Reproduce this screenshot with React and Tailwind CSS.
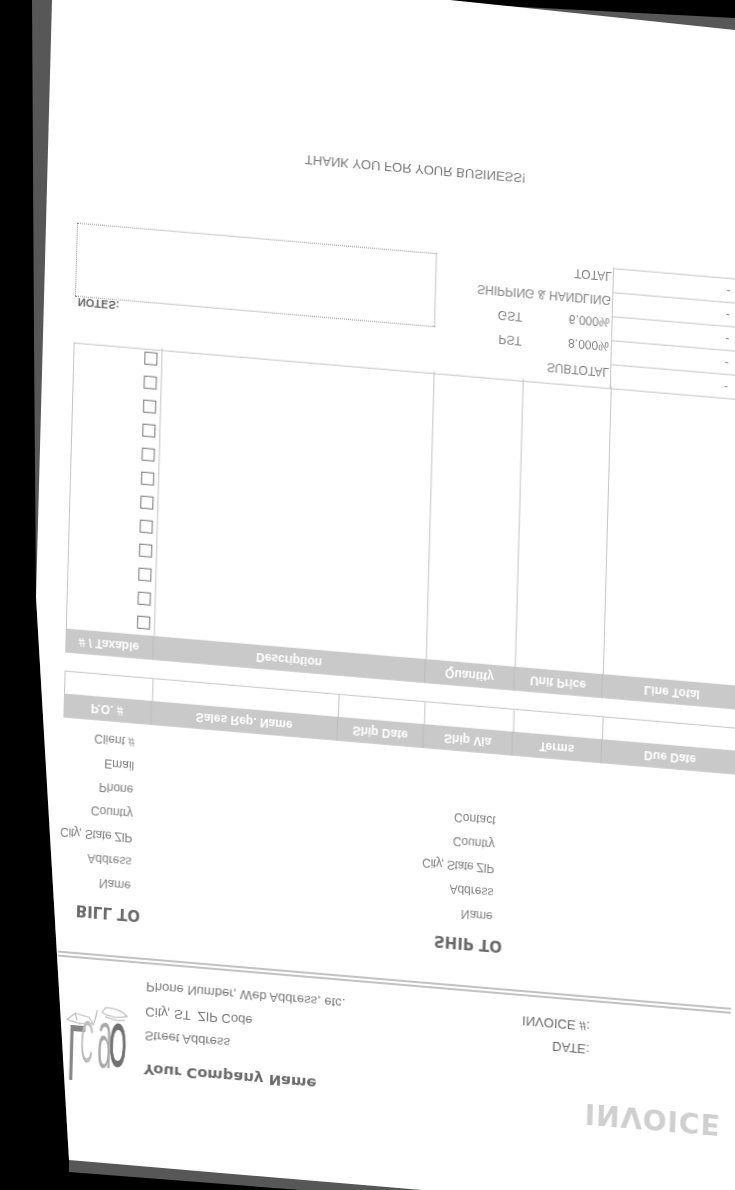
const billFields = ["Name", "Address", "City, State ZIP", "Country", "Phone", "Email", "Client #"];
const shipFields = ["Name", "Address", "City, State ZIP", "Country", "Contact"];
const metaCols = ["P.O. #", "Sales Rep. Name", "Ship Date", "Ship Via", "Terms", "Due Date"];
const lineCols = ["# / Taxable", "Description", "Quantity", "Unit Price", "Line Total"];
const rows = Array.from({ length: 12 }, (_, i) => i);

function Logo() {
  return (
    <svg width="70" height="100" viewBox="0 0 70 100" className="shrink-0 overflow-visible">
      <g fontFamily="Liberation Sans, sans-serif">
        <text transform="translate(5 75) scale(0.42 1)" fontSize="80" fill="#858585">L</text>
        <text transform="translate(18 79.5) scale(0.3 1)" fontSize="60" fill="#bcbcbc">C</text>
        <text transform="translate(35 67) scale(0.42 1)" fontSize="61" fill="#a8a8a8">g</text>
        <text transform="translate(47 79) scale(0.36 1)" fontSize="60" fill="#707070" stroke="#707070" strokeWidth="2">O</text>
      </g>
      <g fill="none" stroke="#c2c2c2" strokeWidth="1.3">
        <path d="M4 80 L12 87 L26 84 L30 78 L16 77 Z" />
        <path d="M12 87 L14 80" />
        <path d="M30 76 Q33 84 34 92" />
        <path d="M39 90 Q50 84 64 88 Q56 96 42 95 Z" />
        <path d="M42 86 Q52 82 62 84" />
      </g>
    </svg>
  );
}

function Header() {
  return (
    <div className="flex h-[172px] w-[676px] justify-between">
      <div className="flex pl-[10px] pt-[30px]">
        <Logo />
        <div className="ml-[12px] pt-[25px] text-[13px] leading-[24.5px] text-[#777] whitespace-nowrap">
          <div className="font-['DejaVu_Sans',sans-serif] text-[14.8px] font-bold text-[#6a6a6a]">Your Company Name</div>
          <div className="mt-[9px]">Street Address</div>
          <div className="whitespace-pre">City, ST  ZIP Code</div>
          <div>Phone Number, Web Address, etc.</div>
        </div>
      </div>
      <div className="flex flex-col items-end pt-[46px] pr-[7px]">
        <div className="font-['DejaVu_Sans',sans-serif] text-[28px] leading-[30px] font-bold tracking-[1px] text-[#cfcfcf]">INVOICE</div>
        <div className="mr-[133px] mt-[37px] text-[13px] leading-[23px] text-[#666] text-right">
          <div>DATE:</div>
          <div>INVOICE #:</div>
        </div>
      </div>
    </div>
  );
}

function Field({ name }) {
  return (
    <div className={`h-[24px] leading-[24px] ${name.startsWith("City") ? "tracking-[-0.3px]" : ""}`}>{name}</div>
  );
}

function Addresses() {
  return (
    <div className="flex pt-[30px] pb-[6px] text-[12px] text-[#808080] whitespace-nowrap">
      <div className="flex w-[84px] flex-col items-end">
        <div className="h-[24px] font-['DejaVu_Sans',sans-serif] text-[15px] leading-[24px] font-bold text-[#6a6a6a]">BILL TO</div>
        <div className="mt-[5px] flex flex-col items-end pr-[10px]">
          {billFields.map((f) => (
            <Field key={f} name={f} />
          ))}
        </div>
      </div>
      <div className="flex w-[362px] flex-col items-end">
        <div className="h-[24px] font-['DejaVu_Sans',sans-serif] text-[15px] leading-[24px] font-bold text-[#6a6a6a]">SHIP TO</div>
        <div className="mt-[5px] flex flex-col items-end pr-[10px]">
          {shipFields.map((f) => (
            <Field key={f} name={f} />
          ))}
        </div>
      </div>
    </div>
  );
}

function MetaTable() {
  return (
    <div className="ml-[2px]">
      <div className="grid h-[24px] grid-cols-[87px_186px_86px_89px_89px_138px] bg-[#c9c9c9]">
        {metaCols.map((c, i) => (
          <div key={c} className={`flex items-center justify-center text-[12px] font-bold text-white ${i > 0 ? "border-l border-[#bdbdbd]" : ""}`}>{c}</div>
        ))}
      </div>
      <div className="grid h-[23px] grid-cols-[87px_186px_86px_89px_89px_138px] border-b border-l border-[#c4c4c4]">
        {metaCols.map((c, i) => (
          <div key={c} className={i > 0 ? "border-l border-[#c4c4c4]" : ""} />
        ))}
      </div>
    </div>
  );
}

function LineTable() {
  return (
    <div className="ml-[2px] mt-[18px]">
      <div className="grid h-[24px] grid-cols-[87px_272px_89px_88px_140px] bg-[#c9c9c9]">
        {lineCols.map((c, i) => (
          <div key={c} className={`flex items-center justify-center text-[12px] font-bold text-white ${i > 0 ? "border-l border-[#bdbdbd]" : ""}`}>{c}</div>
        ))}
      </div>
      <div className="grid h-[285.5px] grid-cols-[87px_272px_89px_88px_140px] border-b border-l border-[#c4c4c4]">
        <div className="flex flex-col">
          {rows.map((r) => (
            <div key={r} className="flex h-[24px] items-center justify-end pr-[4px]">
              <div className="size-[13px] border border-[#777] bg-white" />
            </div>
          ))}
        </div>
        <div className="border-l border-[#c4c4c4]" />
        <div className="border-l border-[#c4c4c4]" />
        <div className="border-l border-[#c4c4c4]" />
        <div className="border-l border-[#c4c4c4]" />
      </div>
    </div>
  );
}

function TotalRow({ label, rate }) {
  return (
    <div className="grid h-[24px] grid-cols-[88px_88px_140px] items-stretch text-[12px] leading-[12px] text-[#808080]">
      {rate ? (
        <>
          <div className="flex items-end justify-end pb-[2px] pr-px">{label}</div>
          <div className="flex items-end justify-end pr-[2px]">{rate}</div>
        </>
      ) : (
        <div className="col-span-2 flex items-end justify-end whitespace-nowrap pb-[2px] pr-px">{label}</div>
      )}
      <div className="flex items-center justify-end border-b border-l border-[#c4c4c4] pr-[22px]">-</div>
    </div>
  );
}

function Notes() {
  return (
    <div className="ml-[2px] flex">
      <div className="w-[360px] pt-[36px]">
        <div className="pl-[3px] text-[11px] leading-[10px] font-bold text-[#666]">NOTES:</div>
        <div className="h-[74.5px] border border-dotted border-[#8a8a8a]" />
      </div>
      <div>
        <TotalRow label="SUBTOTAL" />
        <TotalRow label="PST" rate="8.000%" />
        <TotalRow label="GST" rate="6.000%" />
        <TotalRow label="SHIPPING & HANDLING" />
        <TotalRow label="TOTAL" />
      </div>
    </div>
  );
}

export default function App() {
  return (
    <div className="relative h-[1190px] w-[735px] overflow-hidden bg-black font-['Liberation_Sans',Arial,sans-serif]">
      {/* scanner bed showing round the sheet */}
      <div className="absolute inset-0 bg-[#575757] [clip-path:polygon(32px_0,385px_0,735px_18px,735px_1190px,300px_1190px,69px_1172px,69px_1160px,36px_597px,34px_340px)]" />
      <div className="absolute inset-0 bg-white [clip-path:polygon(52px_0,450px_0,735px_30px,735px_1190px,422px_1190px,69px_1160px,36px_597px)]" />

      {/* the page was scanned mirrored, so the whole form flows inside one flipped, skewed box */}
      <div className="absolute left-0 top-0 w-[700px] origin-top-left blur-[0.5px] [transform:matrix(1,0.085,0.0276,-1,50,1128.3)]">
        <Header />
        <div className="ml-[3px] h-[6px] w-[673px] border-y-2 border-[#c0c0c0]" />
        <Addresses />
        <MetaTable />
        <LineTable />
        <Notes />
        <div className="mt-[75px] w-[676px] text-center text-[13px] leading-[16px] text-[#777]">THANK YOU FOR YOUR BUSINESS!</div>
      </div>
    </div>
  );
}
